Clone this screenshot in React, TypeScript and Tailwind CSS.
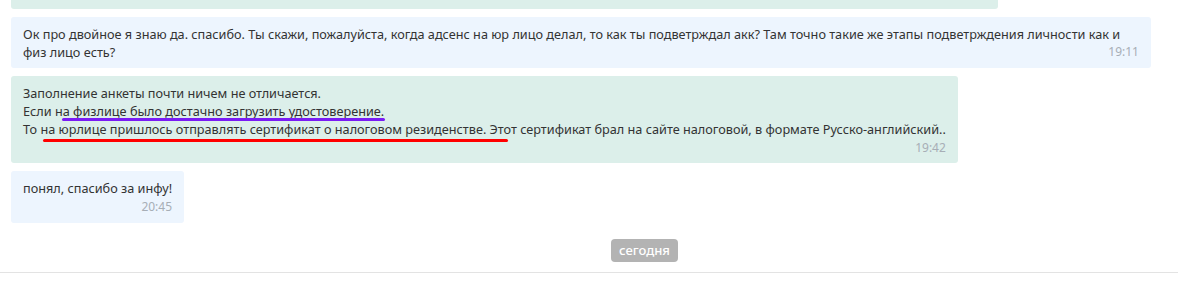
type Msg = {
  id: number
  tone: "in" | "out"
  body: React.ReactNode
  time: string
  lastLine?: string
  wide?: boolean
  pb: string
}

const font = { fontFamily: '"Noto Sans", "Open Sans", sans-serif' }

function Time({ value }: { value: string }) {
  return <span className="text-[12px] leading-[18px] text-[#a7aeb6]">{value}</span>
}

function Bubble({ msg }: { msg: Msg }) {
  return (
    <div
      className={
        "relative max-w-[1140px] rounded-[3px] px-3 pt-2 text-[12.7px] leading-[18px] text-[#333333] " +
        (msg.wide ? "w-[1140px] " : "w-fit ") +
        (msg.tone === "in" ? "bg-[#edf5fe] " : "bg-[#dcefea] ") +
        msg.pb
      }
    >
      <div>{msg.body}</div>
      {msg.lastLine ? (
        <div className="flex justify-between gap-3">
          <span>{msg.lastLine}</span>
          <Time value={msg.time} />
        </div>
      ) : (
        <div className="text-right">
          <Time value={msg.time} />
        </div>
      )}
    </div>
  )
}

export default function App() {
  const messages: Msg[] = [
    {
      id: 1,
      tone: "in",
      time: "19:11",
      wide: true,
      pb: "pb-[7px]",
      body: "Ок про двойное я знаю да. спасибо. Ты скажи, пожалуйста, когда адсенс на юр лицо делал, то как ты подветрждал акк? Там точно такие же этапы подветрждения личности как и",
      lastLine: "физ лицо есть?",
    },
    {
      id: 2,
      tone: "out",
      time: "19:42",
      pb: "pb-[6px]",
      body: (
        <>
          <div>Заполнение анкеты почти ничем не отличается.</div>
          <div>Если на физлице было достачно загрузить удостоверение.</div>
          <div>
            То на юрлице пришлось отправлять сертификат о налоговом резиденстве. Этот сертификат брал на сайте
            налоговой, в формате Русско-английский..
          </div>
          {/* hand-drawn marks from the screenshot */}
          <span className="absolute left-[51px] top-[42px] h-[3px] w-[323px] rounded-full bg-[#7a1cf4]" />
          <span className="absolute left-[32px] top-[63px] h-[3px] w-[465px] rounded-full bg-[#ff0000]" />
        </>
      ),
    },
    {
      id: 3,
      tone: "in",
      time: "20:45",
      pb: "pb-[7px]",
      body: "понял, спасибо за инфу!",
    },
  ]

  return (
    <div className="flex h-[286px] w-[1178px] flex-col overflow-hidden bg-white" style={font}>
      <div className="flex flex-col gap-2 px-[11px]">
        <div className="h-[9px] w-[987px] rounded-b-[3px] bg-[#dcefea]" />
        {messages.map((m) => (
          <Bubble key={m.id} msg={m} />
        ))}
      </div>

      <div className="mt-4 flex justify-center pl-[111px]">
        <span className="rounded-[4px] bg-[#b3b3b3] px-2 text-[13px] font-medium leading-[23px] text-white">
          сегодня
        </span>
      </div>

      <div className="mt-[10px] border-t border-[#e3e3e3]" />
    </div>
  )
}
